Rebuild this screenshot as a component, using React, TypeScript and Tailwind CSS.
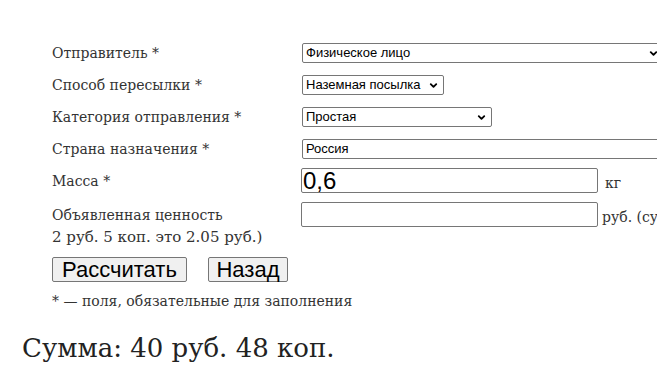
import { ChevronDown } from 'lucide-react';

const serif = { fontFamily: '"DejaVu Serif", Georgia, serif' };

function FakeSelect({ value, width }: { value: string; width: string }) {
  return (
    <div
      className={`flex h-[20px] items-center justify-between rounded-[2px] border border-[#767676] bg-white pl-[3px] pr-[4px] font-['Liberation_Sans',Arial,sans-serif] text-[13px] text-black ${width}`}
    >
      <span>{value}</span>
      <ChevronDown size={11} strokeWidth={4} className="text-black" />
    </div>
  );
}

export default function App() {
  return (
    <div className="h-[384px] w-[657px] overflow-hidden bg-white text-[#333]">
      {/* Form table */}
      <div className="pt-[43px] pl-[52px]">
        <div className="grid grid-cols-[250px_1fr] items-center gap-y-[12px] text-[14px] leading-[20px]" style={serif}>
          <div className="whitespace-nowrap">Отправитель *</div>
          <FakeSelect value="Физическое лицо" width="w-[362px]" />

          <div className="whitespace-nowrap">Способ пересылки *</div>
          <FakeSelect value="Наземная посылка" width="w-[142px]" />

          <div className="whitespace-nowrap">Категория отправления *</div>
          <FakeSelect value="Простая" width="w-[190px]" />

          <div className="whitespace-nowrap">Страна назначения *</div>
          <div className="flex h-[20px] w-[362px] items-center rounded-[2px] border border-[#767676] bg-white pl-[3px] font-['Liberation_Sans',Arial,sans-serif] text-[13px] text-black">
            Россия
          </div>
        </div>

        <div className="mt-[9px] grid grid-cols-[249px_1fr] items-center gap-y-[9px] text-[14px] leading-[20px]" style={serif}>
          <div className="whitespace-nowrap">Масса *</div>
          <div className="flex items-end gap-[7px] whitespace-nowrap">
            <div className="flex h-[25px] w-[297px] items-center rounded-[2px] border border-[#767676] bg-white pl-[1px] font-['Liberation_Sans',Arial,sans-serif] text-[24px] leading-none text-black">
              0,6
            </div>
            <span>кг</span>
          </div>

          <div className="whitespace-nowrap">Объявленная ценность</div>
          <div className="flex items-end gap-[4px] whitespace-nowrap">
            <div className="h-[25px] w-[297px] shrink-0 rounded-[2px] border border-[#767676] bg-white" />
            <span>руб. (сумма в рублях, например</span>
          </div>
        </div>

        <div className="whitespace-nowrap text-[15px] leading-[20px]" style={serif}>
          2 руб. 5 коп. это 2.05 руб.)
        </div>

        <div className="mt-[10px] flex gap-[21px] font-['Liberation_Sans',Arial,sans-serif] text-[22px] leading-none text-black">
          <button className="h-[25px] w-[135px] rounded-[2px] border border-[#767676] bg-[#f0f0f0]">
            Рассчитать
          </button>
          <button className="h-[25px] w-[80px] rounded-[2px] border border-[#767676] bg-[#f0f0f0]">
            Назад
          </button>
        </div>

        <div className="mt-[9px] whitespace-nowrap text-[14px] leading-[20px]" style={serif}>
          * — поля, обязательные для заполнения
        </div>
      </div>

      <div className="mt-[19px] pl-[22px] whitespace-nowrap text-[26px] leading-[36px] text-[#222]" style={serif}>
        Сумма: 40 руб. 48 коп.
      </div>
    </div>
  );
}
